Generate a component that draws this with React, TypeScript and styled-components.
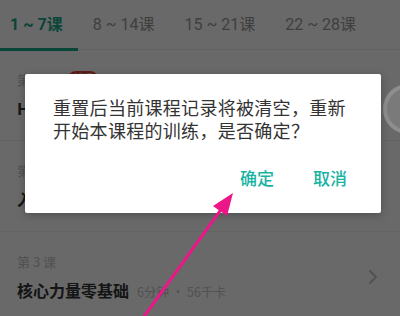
import * as React from 'react';
import styled, { createGlobalStyle } from 'styled-components';

const COLORS = {
    teal: '#17b3a3',
    tabTeal: '#1aa88a',
    text: '#333333',
    grey: '#9a9a9a',
    light: '#c4c4c4',
    red: '#e8453c',
    arrow: '#ec1688',
};

const GlobalStyle = createGlobalStyle`
    html, body {
        margin: 0;
        padding: 0;
        background: #ffffff;
    }
    body {
        font-family: Roboto, "Noto Sans CJK SC", sans-serif;
    }
`;

const Screen = styled.div`
    position: relative;
    width: 400px;
    height: 316px;
    overflow: hidden;
    background: #ffffff;
`;

const TabBar = styled.div`
    display: flex;
    align-items: center;
    gap: 30px;
    height: 50px;
    padding-left: 10px;
    border-bottom: 1px solid #eeeeee;
    box-sizing: border-box;
`;

const Tab = styled.div<{ active?: boolean }>`
    position: relative;
    height: 50px;
    line-height: 50px;
    font-size: 16px;
    font-weight: ${(p) => (p.active ? 700 : 400)};
    color: ${(p) => (p.active ? COLORS.tabTeal : COLORS.grey)};
    white-space: nowrap;

    &::after {
        content: '';
        display: ${(p) => (p.active ? 'block' : 'none')};
        position: absolute;
        left: -10px;
        right: -15px;
        bottom: -1px;
        height: 3px;
        background: ${COLORS.tabTeal};
    }
`;

const LessonRow = styled.div`
    display: flex;
    align-items: center;
    height: 91px;
    padding: 0 22px 0 17px;
    border-bottom: 1px solid #f0f0f0;
    box-sizing: border-box;
`;

const LessonBody = styled.div`
    flex: 1;
    display: flex;
    flex-direction: column;
    gap: 8px;
`;

const LabelRow = styled.div`
    display: flex;
    align-items: center;
    gap: 12px;
    height: 18px;
`;

const Label = styled.span`
    font-family: "Noto Sans CJK SC", sans-serif;
    font-size: 13px;
    color: ${COLORS.light};
`;

const Badge = styled.span`
    display: inline-block;
    height: 16px;
    line-height: 16px;
    padding: 0 5px;
    font-size: 10px;
    color: #ffffff;
    background: ${COLORS.red};
    border-radius: 8px 8px 8px 2px;
`;

const TitleRow = styled.div`
    display: flex;
    align-items: baseline;
    gap: 8px;
`;

const Title = styled.span`
    font-family: "Noto Sans CJK SC", sans-serif;
    font-size: 16px;
    font-weight: 700;
    color: ${COLORS.text};
`;

const Meta = styled.span`
    font-family: "Noto Sans CJK SC", sans-serif;
    font-size: 12.5px;
    color: ${COLORS.light};
`;

const Chevron = styled.svg`
    width: 10px;
    height: 16px;
    color: ${COLORS.light};
`;

const Overlay = styled.div`
    position: absolute;
    inset: 0;
    background: rgba(0, 0, 0, 0.59);
`;

const FloatButton = styled.div`
    position: absolute;
    left: 383px;
    top: 84px;
    width: 50px;
    height: 50px;
    border-radius: 50%;
    background: #7a7a7a;
    border: 4px solid #8e8e8e;
    box-sizing: border-box;
`;

const Dialog = styled.div`
    position: absolute;
    left: 25px;
    top: 74px;
    width: 356px;
    height: 139px;
    display: flex;
    flex-direction: column;
    padding: 22px 28px 23px;
    box-sizing: border-box;
    background: #ffffff;
    border-radius: 2px;
    box-shadow: 0 2px 8px rgba(0, 0, 0, 0.25);
`;

const Message = styled.p`
    margin: 0;
    font-family: "Noto Sans CJK SC", sans-serif;
    font-size: 18px;
    line-height: 23px;
    letter-spacing: 0.3px;
    color: ${COLORS.text};
`;

const Actions = styled.div`
    display: flex;
    justify-content: flex-end;
    gap: 39px;
    margin-top: auto;
    padding-right: 6px;
`;

const ActionButton = styled.button`
    border: 0;
    padding: 0;
    background: none;
    font-family: "Noto Sans CJK SC", sans-serif;
    font-size: 17px;
    font-weight: 500;
    line-height: 24px;
    color: ${COLORS.teal};
    cursor: pointer;
`;

const Annotation = styled.svg`
    position: absolute;
    inset: 0;
    width: 400px;
    height: 316px;
    pointer-events: none;
`;

const tabs = ['1 ~ 7课', '8 ~ 14课', '15 ~ 21课', '22 ~ 28课'];

const lessons = [
    { no: 1, title: 'HIIT 燃脂入门', meta: '8分钟 · 72千卡', isNew: true },
    { no: 2, title: '入门拉伸放松', meta: '5分钟 · 30千卡', isNew: false },
    { no: 3, title: '核心力量零基础', meta: '6分钟 · 56千卡', isNew: false },
];

export default function App() {
    return (
        <Screen>
            <GlobalStyle />
            <TabBar>
                {tabs.map((t, i) => (
                    <Tab key={t} active={i === 0}>{t}</Tab>
                ))}
            </TabBar>
            {lessons.map((lesson) => (
                <LessonRow key={lesson.no}>
                    <LessonBody>
                        <LabelRow>
                            <Label>第 {lesson.no} 课</Label>
                            {lesson.isNew && <Badge>新课</Badge>}
                        </LabelRow>
                        <TitleRow>
                            <Title>{lesson.title}</Title>
                            <Meta>{lesson.meta}</Meta>
                        </TitleRow>
                    </LessonBody>
                    <Chevron viewBox="0 0 10 16" fill="none">
                        <path d="M2 2 L8 8 L2 14" stroke="currentColor" strokeWidth="1.8" strokeLinecap="round" strokeLinejoin="round" />
                    </Chevron>
                </LessonRow>
            ))}
            <Overlay />
            <FloatButton />
            <Dialog>
                <Message>重置后当前课程记录将被清空，重新开始本课程的训练，是否确定？</Message>
                <Actions>
                    <ActionButton>确定</ActionButton>
                    <ActionButton>取消</ActionButton>
                </Actions>
            </Dialog>
            <Annotation viewBox="0 0 400 316">
                <line x1="143" y1="318" x2="222" y2="208" stroke={COLORS.arrow} strokeWidth="3" strokeLinecap="round" />
                <polygon points="233,193 213,206 227,216" fill={COLORS.arrow} />
            </Annotation>
        </Screen>
    );
}
